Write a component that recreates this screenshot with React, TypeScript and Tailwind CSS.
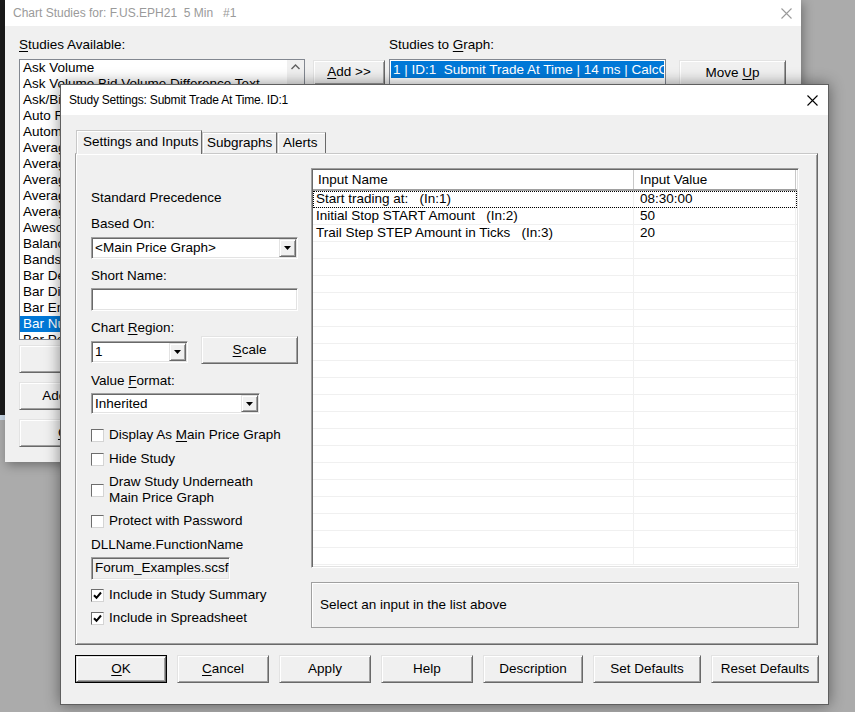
import type { ReactNode } from 'react'

// Windows-classic style controls, drawn with borders only
const raised =
  'border border-t-[#e3e3e3] border-l-[#e3e3e3] border-b-[#696969] border-r-[#696969] shadow-[inset_1px_1px_0_#ffffff,inset_-1px_-1px_0_#a0a0a0]'
const sunken =
  'border border-t-[#a0a0a0] border-l-[#a0a0a0] border-b-white border-r-white shadow-[inset_1px_1px_0_#696969,inset_-1px_-1px_0_#e3e3e3]'

function Btn({ children, className = '', isDefault = false }: { children?: ReactNode; className?: string; isDefault?: boolean }) {
  if (isDefault) {
    return (
      <div className={`border border-black bg-[#f0f0f0] ${className}`}>
        <div className={`flex h-full w-full items-center justify-center ${raised}`}>{children}</div>
      </div>
    )
  }
  return <div className={`flex items-center justify-center whitespace-nowrap bg-[#f0f0f0] ${raised} ${className}`}>{children}</div>
}

function CloseX({ color }: { color: string }) {
  return (
    <svg width="11" height="11" viewBox="0 0 11 11">
      <path d="M0.5 0.5 L10.5 10.5 M10.5 0.5 L0.5 10.5" stroke={color} strokeWidth="1.1" />
    </svg>
  )
}

function Combo({ value, className = '' }: { value: string; className?: string }) {
  return (
    <div className={`flex bg-white ${sunken} ${className}`}>
      <span className="flex-1 truncate pl-[3px] leading-[18px] self-center">{value}</span>
      <div className={`m-[1px] flex w-[17px] items-center justify-center bg-[#f0f0f0] ${raised}`}>
        <svg width="7" height="4" viewBox="0 0 7 4">
          <path d="M0 0 H7 L3.5 4 Z" fill="#000" />
        </svg>
      </div>
    </div>
  )
}

function Check({ checked = false, children }: { checked?: boolean; children: ReactNode }) {
  return (
    <div className="flex min-h-[16px] items-center">
      <div className="flex h-[13px] w-[13px] shrink-0 items-center justify-center border border-t-[#6d6d6d] border-l-[#6d6d6d] border-b-[#d4d4d4] border-r-[#d4d4d4] bg-white">
        {checked && (
          <svg width="9" height="9" viewBox="0 0 9 9">
            <path d="M1 4.2 L3.5 6.8 L8 1.5" stroke="#000" strokeWidth="2" fill="none" />
          </svg>
        )}
      </div>
      <div className="ml-[5px] whitespace-nowrap leading-[16px]">{children}</div>
    </div>
  )
}

const studies = [
  'Ask Volume',
  'Ask Volume Bid Volume Difference Text',
  'Ask/Bid Volume Difference Bars',
  'Auto Retracement/Projection',
  'Automatic Trend Lines',
  'Average Daily Range',
  'Average Directional Index',
  'Average Directional Index Rating',
  'Average Price',
  'Average True Range',
  'Awesome Oscillator',
  'Balance of Power',
  'Bands/Channel',
  'Bar Delta',
  'Bar Difference',
  'Bar End Time',
  'Bar Number',
  'Bar Period',
]

const inputs = [
  { name: 'Start trading at:   (In:1)', value: '08:30:00' },
  { name: 'Initial Stop START Amount   (In:2)', value: '50' },
  { name: 'Trail Step STEP Amount in Ticks   (In:3)', value: '20' },
]

function BackWindow() {
  return (
    <div className="absolute left-[5px] top-0 h-[462px] w-[796px] bg-[#f0f0f0] shadow-[2px_3px_10px_rgba(0,0,0,0.35)]">
      <div className="flex h-[26px] items-center justify-between bg-white pl-[8px] pr-[9px]">
        <span className="text-[12px] text-[#9a9a9a]">Chart Studies for: F.US.EPH21&nbsp; 5 Min&nbsp;&nbsp; #1</span>
        <CloseX color="#9a9a9a" />
      </div>
      <div className="mt-[11px] flex items-start pl-[14px]">
        <div className="flex w-[286px] flex-col">
          <div className="h-[16px] leading-[16px]">
            <u className="underline-offset-2">S</u>tudies Available:
          </div>
          <div className="mt-[6px] flex h-[281px] overflow-hidden border border-[#828790] bg-white">
            <div className="flex-1 overflow-hidden">
              {studies.map((s, i) => (
                <div
                  key={s}
                  className={`h-[16px] whitespace-nowrap pl-[3px] leading-[16px] ${i === 16 ? 'bg-[#0078d7] text-white' : ''}`}
                >
                  {s}
                </div>
              ))}
            </div>
            <div className="flex w-[17px] justify-center bg-[#f0f0f0] pt-[4px]">
              <svg width="9" height="6" viewBox="0 0 9 6">
                <path d="M0.5 5 L4.5 1 L8.5 5" stroke="#606060" strokeWidth="1.4" fill="none" />
              </svg>
            </div>
          </div>
          <Btn className="mt-[5px] h-[28px] w-[159px]">Remove</Btn>
          <Btn className="mt-[9px] h-[28px] w-[159px]">Add Custom Study</Btn>
          <Btn className="mt-[9px] h-[28px] w-[159px]">
            <span>
              <u className="underline-offset-2">C</u>lear Studies
            </span>
          </Btn>
        </div>
        <Btn className="ml-[8px] mt-[23px] h-[25px] w-[72px]">
          <span>
            <u className="underline-offset-2">A</u>dd &gt;&gt;
          </span>
        </Btn>
        <div className="ml-[4px] flex w-[277px] flex-col">
          <div className="h-[16px] leading-[16px]">
            Studies to <u className="underline-offset-2">G</u>raph:
          </div>
          <div className="mt-[6px] h-[300px] border border-[#828790] bg-white p-[1px]">
            <div className="h-[17px] overflow-hidden whitespace-nowrap bg-[#0078d7] pl-[2px] leading-[17px] text-white">
              1 | ID:1&nbsp; Submit Trade At Time | 14 ms | CalcOrder: 1
            </div>
          </div>
        </div>
        <Btn className="ml-[13px] mt-[23px] h-[26px] w-[107px]">
          <span>
            Move <u className="underline-offset-2">U</u>p
          </span>
        </Btn>
      </div>
    </div>
  )
}

function InputsTable() {
  const rows = Array.from({ length: 22 }, (_, i) => inputs[i])
  return (
    <div className={`h-[400px] w-[488px] bg-white ${sunken} p-[1px]`}>
      <div className="flex h-[21px] border-b-2 border-b-[#a0a0a0] bg-white">
        <div className="w-[321px] border-r border-r-[#c8c8c8] pl-[5px] leading-[19px]">Input Name</div>
        <div className="w-[162px] border-r border-r-[#c8c8c8] pl-[6px] leading-[19px]">Input Value</div>
      </div>
      {rows.map((r, i) => (
        <div
          key={i}
          className={`flex h-[17px] border-b border-b-[#f0f0f0] ${i === 0 ? 'outline-1 outline-dotted outline-offset-[-1px] outline-black' : ''}`}
        >
          <div className="w-[321px] whitespace-pre border-r border-r-[#f0f0f0] pl-[3px] leading-[16px]">{r?.name ?? ''}</div>
          <div className="w-[162px] border-r border-r-[#f0f0f0] pl-[6px] leading-[16px]">{r?.value ?? ''}</div>
        </div>
      ))}
    </div>
  )
}

function StudySettings() {
  return (
    <div className="absolute left-[60px] top-[84px] h-[621px] w-[769px] border border-[#5f5f5f] bg-[#f0f0f0] shadow-[0_0_14px_rgba(0,0,0,0.45)]">
      <div className="flex h-[30px] items-center justify-between bg-white pl-[8px] pr-[10px]">
        <span className="text-[12px] tracking-[-0.2px]">Study Settings: Submit Trade At Time. ID:1</span>
        <CloseX color="#000" />
      </div>
      <div className="pl-[14px]">
        {/* tabs */}
        <div className="relative z-10 mt-[15px] flex h-[23px] items-end whitespace-nowrap pl-[1px]">
          <div className="-mb-px flex h-[24px] w-[126px] items-center border border-b-0 border-t-[#c8c8c8] border-l-[#c8c8c8] border-r-[#696969] bg-[#f0f0f0] pl-[6px] shadow-[inset_1px_1px_0_#fff]">
            Settings and Inputs
          </div>
          <div className="flex h-[21px] w-[75px] items-center border border-b-0 border-t-[#c8c8c8] border-l-[#c8c8c8] border-r-[#696969] bg-[#f0f0f0] pl-[4px] shadow-[inset_1px_1px_0_#fff]">
            Subgraphs
          </div>
          <div className="flex h-[21px] w-[49px] items-center border border-b-0 border-t-[#c8c8c8] border-l-[#c8c8c8] border-r-[#696969] bg-[#f0f0f0] pl-[5px] shadow-[inset_1px_1px_0_#fff]">
            Alerts
          </div>
        </div>
        {/* tab panel */}
        <div className="flex h-[492px] w-[743px] border border-t-[#c8c8c8] border-l-[#a0a0a0] border-b-[#696969] border-r-[#696969] shadow-[inset_1px_1px_0_#fff,inset_-1px_-1px_0_#a0a0a0]">
          <div className="flex w-[235px] flex-col pl-[15px]">
            <div className="mt-[36px] h-[16px] leading-[16px]">Standard Precedence</div>
            <div className="mt-[10px] h-[16px] leading-[16px]">Based On:</div>
            <Combo value="<Main Price Graph>" className="mt-[5px] h-[22px] w-[207px]" />
            <div className="mt-[9px] h-[16px] leading-[16px]">Short Name:</div>
            <div className={`mt-[4px] h-[23px] w-[207px] bg-white ${sunken}`} />
            <div className="mt-[9px] h-[16px] leading-[16px]">
              Chart <u className="underline-offset-2">R</u>egion:
            </div>
            <div className="flex h-[28px] items-start">
              <Combo value="1" className="mt-[5px] h-[22px] w-[97px]" />
              <Btn className="ml-[13px] h-[28px] w-[97px]">
                <span>
                  <u className="underline-offset-2">S</u>cale
                </span>
              </Btn>
            </div>
            <div className="mt-[9px] h-[16px] leading-[16px]">
              Value <u className="underline-offset-2">F</u>ormat:
            </div>
            <Combo value="Inherited" className="mt-[4px] h-[21px] w-[169px]" />
            <div className="mt-[13px]">
              <Check>
                Display As <u className="underline-offset-2">M</u>ain Price Graph
              </Check>
            </div>
            <div className="mt-[8px]">
              <Check>Hide Study</Check>
            </div>
            <div className="mt-[7px]">
              <Check>
                Draw Study Underneath
                <br />
                Main Price Graph
              </Check>
            </div>
            <div className="mt-[7px]">
              <Check>Protect with Password</Check>
            </div>
            <div className="mt-[8px] h-[16px] leading-[16px]">DLLName.FunctionName</div>
            <div className={`mt-[4px] flex h-[23px] w-[139px] items-center overflow-hidden whitespace-nowrap bg-[#f0f0f0] pl-[3px] ${sunken}`}>
              Forum_Examples.scsf
            </div>
            <div className="mt-[7px]">
              <Check checked>Include in Study Summary</Check>
            </div>
            <div className="mt-[7px]">
              <Check checked>Include in Spreadsheet</Check>
            </div>
          </div>
          <div className="mt-[14px] flex flex-col">
            <InputsTable />
            <div className="mt-[14px] flex h-[46px] w-[488px] items-center border border-[#a0a0a0] pl-[8px] shadow-[inset_1px_1px_0_#fff]">
              Select an input in the list above
            </div>
          </div>
        </div>
        {/* buttons */}
        <div className="mt-[10px] flex gap-[10px]">
          <Btn isDefault className="h-[28px] w-[92px]">
            <span>
              <u className="underline-offset-2">O</u>K
            </span>
          </Btn>
          <Btn className="h-[28px] w-[92px]">
            <span>
              <u className="underline-offset-2">C</u>ancel
            </span>
          </Btn>
          <Btn className="h-[28px] w-[92px]">Apply</Btn>
          <Btn className="h-[28px] w-[92px]">Help</Btn>
          <Btn className="h-[28px] w-[100px]">Description</Btn>
          <Btn className="h-[28px] w-[108px]">Set Defaults</Btn>
          <Btn className="h-[28px] w-[108px]">Reset Defaults</Btn>
        </div>
      </div>
    </div>
  )
}

export default function App() {
  return (
    <div className="relative h-[712px] w-[855px] overflow-hidden bg-[#ababab] font-['Liberation_Sans',Arial,sans-serif] text-[13.5px] text-black">
      <div className="absolute left-0 top-0 flex h-[420px] w-[5px] flex-col">
        <div className="flex-1 bg-[#1b1b1b]" />
        <div className="h-[5px] bg-[#c9d7e6]" />
      </div>
      <BackWindow />
      <StudySettings />
    </div>
  )
}
